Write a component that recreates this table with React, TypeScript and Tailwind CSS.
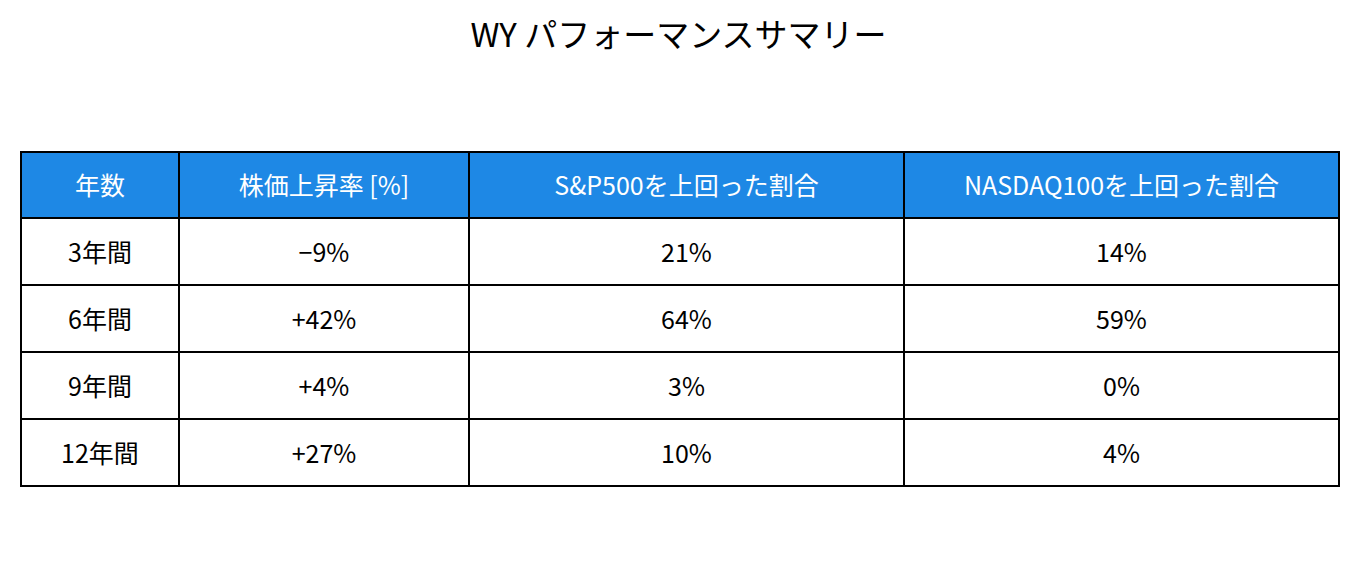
const rows = [
  { years: "3年間", rise: "−9%", sp: "21%", nq: "14%" },
  { years: "6年間", rise: "+42%", sp: "64%", nq: "59%" },
  { years: "9年間", rise: "+4%", sp: "3%", nq: "0%" },
  { years: "12年間", rise: "+27%", sp: "10%", nq: "4%" },
];

export default function App() {
  return (
    <div className="w-[1357px] h-[569px] bg-white text-black font-['Noto_Sans_CJK_JP',sans-serif]">
      <h1 className="pt-[11px] text-center text-[33px] leading-[44px]">
        WY パフォーマンスサマリー
      </h1>

      {/* Summary table */}
      <div className="pl-[20px] pt-[96px]">
        <table className="w-[1318px] border-collapse table-fixed text-[25px]">
          <colgroup>
            <col className="w-[158px]" />
            <col className="w-[290px]" />
            <col className="w-[435px]" />
            <col className="w-[435px]" />
          </colgroup>
          <thead>
            <tr className="h-[66px] bg-[#1e88e5] text-white">
              <th className="border-2 border-black font-normal">年数</th>
              <th className="border-2 border-black font-normal">株価上昇率 [%]</th>
              <th className="border-2 border-black font-normal">S&amp;P500を上回った割合</th>
              <th className="border-2 border-black font-normal">NASDAQ100を上回った割合</th>
            </tr>
          </thead>
          <tbody>
            {rows.map((r) => (
              <tr key={r.years} className="h-[67px] text-center leading-[30px]">
                <td className="border-2 border-black pb-[2px]">{r.years}</td>
                <td className="border-2 border-black pb-[2px]">{r.rise}</td>
                <td className="border-2 border-black pb-[2px]">{r.sp}</td>
                <td className="border-2 border-black pb-[2px]">{r.nq}</td>
              </tr>
            ))}
          </tbody>
        </table>
      </div>
    </div>
  );
}
